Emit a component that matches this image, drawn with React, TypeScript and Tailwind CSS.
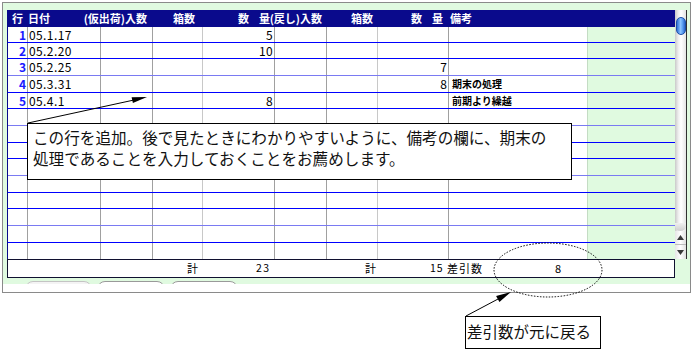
import React from "react";

const VLINE = [
  "border-[#a0a0a0]",
  "border-[#a0a0a0]",
  "border-[#a0a0a0]",
  "border-[#c8c8c8]",
  "border-[#a0a0a0]",
  "border-[#a0a0a0]",
  "border-[#c8c8c8]",
  "border-[#a0a0a0]",
  "border-[#c4dcc4]",
];

const HEIGHTS = [16, 16, 17, 17, 16, 17, 17, 16, 17, 17, 16, 17, 17, 16];

type RowData = {
  date?: string;
  c3?: string;
  c6?: string;
  rem?: string;
};

const DATA: RowData[] = [
  { date: "05.1.17", c3: "5" },
  { date: "05.2.20", c3: "10" },
  { date: "05.2.25", c6: "7" },
  { date: "05.3.31", c6: "8", rem: "期末の処理" },
  { date: "05.4.1", c3: "8", rem: "前期より繰越" },
];

function Row({ i }: { i: number }) {
  const d = DATA[i];
  const h = HEIGHTS[i];
  const last = i === HEIGHTS.length - 1;
  const light = (i + 1) % 3 === 0;
  const lineCls = last
    ? ""
    : light
    ? "border-b border-[#7a7af2]"
    : "border-b border-[#0000ff]";
  return (
    <div className={`flex ${lineCls}`} style={{ height: h }}>
      <div className={`w-[20px] shrink-0 bg-white border-r ${VLINE[0]} flex items-center justify-end pr-[1px] text-[12px] font-bold text-[#1a1aff] leading-none`}>
        {d ? i + 1 : ""}
      </div>
      <div className={`w-[73px] shrink-0 bg-white border-r ${VLINE[1]} flex items-center pl-[1px] text-[12px] text-black leading-none tracking-[0.4px]`}>
        {d?.date ?? ""}
      </div>
      <div className={`w-[52px] shrink-0 bg-white border-r ${VLINE[2]}`} />
      <div className={`w-[50px] shrink-0 bg-white border-r ${VLINE[3]}`} />
      <div className={`w-[72px] shrink-0 bg-white border-r ${VLINE[4]} flex items-center justify-end pr-[1px] text-[12px] text-black leading-none tracking-[0.4px]`}>
        {d?.c3 ?? ""}
      </div>
      <div className={`w-[52px] shrink-0 bg-white border-r ${VLINE[5]}`} />
      <div className={`w-[51px] shrink-0 bg-white border-r ${VLINE[6]}`} />
      <div className={`w-[71px] shrink-0 bg-white border-r ${VLINE[7]} flex items-center justify-end pr-[1px] text-[12px] text-black leading-none`}>
        {d?.c6 ?? ""}
      </div>
      <div className={`w-[139px] shrink-0 bg-white border-r ${VLINE[8]} flex items-center pl-[3px] text-[10px] font-bold text-black leading-none`}>
        {d?.rem ?? ""}
      </div>
      <div className="w-[87px] shrink-0 bg-[#e0fae0]" />
    </div>
  );
}

function Header() {
  return (
    <div className="flex h-[17px] bg-[#0a0a8c] text-white text-[11px] font-bold leading-none items-center whitespace-nowrap">
      <div className="w-[20px] shrink-0 pl-[4px]">行</div>
      <div className="w-[73px] shrink-0">日付</div>
      <div className="w-[52px] shrink-0 flex justify-end pr-[6px]">(仮出荷)入数</div>
      <div className="w-[50px] shrink-0 flex justify-end pr-[8px]">箱数</div>
      <div className="w-[72px] shrink-0 flex justify-end pr-[5px]">
        <span>数</span>
        <span className="ml-[10px]">量</span>
      </div>
      <div className="w-[52px] shrink-0 flex justify-end pr-[5px]">(戻し)入数</div>
      <div className="w-[51px] shrink-0 flex justify-end pr-[5px]">箱数</div>
      <div className="w-[71px] shrink-0 flex justify-end pr-[6px]">
        <span>数</span>
        <span className="ml-[10px]">量</span>
      </div>
      <div className="w-[139px] shrink-0 pl-[1px]">備考</div>
      <div className="w-[87px] shrink-0" />
    </div>
  );
}

function Scrollbar() {
  return (
    <div className="w-[12px] h-[249px] flex flex-col border-r border-[#303030] bg-[linear-gradient(to_right,#c9c9c9,#eeeeee_30%,#ffffff_55%,#e4e4e4)]">
      <div className="flex-1 flex flex-col items-center pt-[7px]">
        <div className="w-[10px] h-[18px] rounded-full border border-[#1b4fa8] bg-[linear-gradient(to_right,#2f6fd8,#8cc4ff_45%,#5a9ef0_70%,#2a62c8)]" />
      </div>
      <div className="h-[8px] bg-[linear-gradient(to_bottom,#f0f0f0,#cfcfcf)] rounded-b-full" />
      <div className="h-[28px] flex flex-col bg-[linear-gradient(to_right,#e6e6e6,#ffffff,#e0e0e0)]">
        <div className="h-[14px] flex items-center justify-center border-b border-[#bdbdbd]">
          <svg width="7" height="5" viewBox="0 0 7 5">
            <polygon points="3.5,0 7,5 0,5" fill="#3a3a3a" />
          </svg>
        </div>
        <div className="h-[14px] flex items-center justify-center">
          <svg width="7" height="5" viewBox="0 0 7 5">
            <polygon points="0,0 7,0 3.5,5" fill="#3a3a3a" />
          </svg>
        </div>
      </div>
    </div>
  );
}

function Footer() {
  return (
    <div className="w-[668px] h-[19px] border border-[#101030] bg-white flex items-center text-[11px] text-black leading-none whitespace-nowrap">
      <div className="w-[179px] shrink-0" />
      <div className="w-[69px] shrink-0">計</div>
      <div className="w-[109px] shrink-0 text-[10.5px] tracking-[1.5px]">23</div>
      <div className="w-[65px] shrink-0">計</div>
      <div className="w-[17px] shrink-0 text-[10.5px] tracking-[1px]">15</div>
      <div className="w-[108px] shrink-0 tracking-[1px]">差引数</div>
      <div className="shrink-0">8</div>
    </div>
  );
}

export default function App() {
  return (
    <div className="relative w-[693px] h-[351px] bg-white overflow-hidden font-['Noto_Sans_CJK_JP','Noto_Sans',sans-serif]">
      <div className="ml-[2px] mt-[2px] w-[689px] border border-[#8a8a8a] bg-white">
        <div className="bg-[#e0fae0] pt-[7px] pl-[4px]">
          <div className="flex">
            <div className="w-[668px] border-l border-[#0a0a8c]">
              <Header />
              {HEIGHTS.map((_, i) => (
                <Row key={i} i={i} />
              ))}
            </div>
            <Scrollbar />
          </div>
          <Footer />
          <div className="h-[3px]" />
          <div className="h-[3px] overflow-hidden flex pl-[18px]">
            <div className="w-[67px] h-[16px] shrink-0 rounded-[8px] border border-[#c4c4c4] bg-[#f4f4f4]" />
            <div className="w-[68px] h-[16px] shrink-0 ml-[5px] rounded-[8px] border border-[#9a9a9a] bg-white" />
            <div className="w-[68px] h-[16px] shrink-0 ml-[5px] rounded-[8px] border border-[#9a9a9a] bg-white" />
          </div>
        </div>
        <div className="h-[8px] bg-white" />
      </div>

      <svg className="absolute left-0 top-0 pointer-events-none" width="693" height="351" viewBox="0 0 693 351">
        <line x1="28" y1="123" x2="134" y2="100" stroke="#000" strokeWidth="1" />
        <polygon points="147,97 132.9,103.1 131.6,97.3" fill="#000" />
        <ellipse cx="548" cy="270" rx="54" ry="27" fill="none" stroke="#000" strokeWidth="1" strokeDasharray="1.5 1.5" />
        <line x1="466" y1="316" x2="499" y2="298.5" stroke="#000" strokeWidth="1" />
        <polygon points="511,292 499.4,302.1 496.1,295.9" fill="#000" />
      </svg>

      <div className="absolute left-[27px] top-[123px] w-[545px] h-[57px] border border-black bg-white pl-[5px] pt-[3px] text-[15.6px] leading-[21px] text-[#111] whitespace-nowrap">
        この行を追加。後で見たときにわかりやすいように、備考の欄に、期末の
        <br />
        処理であることを入力しておくことをお薦めします。
      </div>

      <div className="absolute left-[465px] top-[316px] w-[136px] h-[33px] border border-black bg-white pl-[1px] pt-[4px] text-[15.5px] leading-[21px] text-[#111] whitespace-nowrap">
        差引数が元に戻る
      </div>
    </div>
  );
}
